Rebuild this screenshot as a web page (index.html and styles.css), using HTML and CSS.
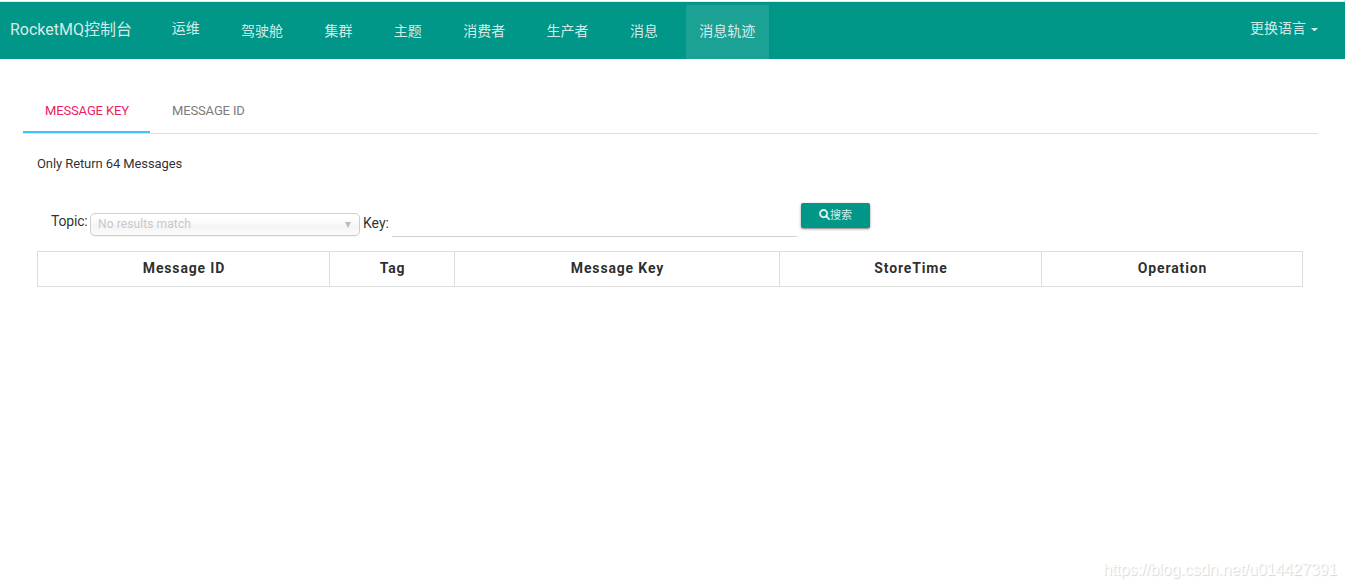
FILE: index.html
```html
<!DOCTYPE html>
<html lang="zh">
<head>
<meta charset="utf-8">
<title>RocketMQ控制台</title>
<link rel="stylesheet" href="styles.css">
</head>
<body>
<header class="navbar">
  <a class="brand">RocketMQ控制台</a>
  <nav class="menu">
    <a class="item raised">运维</a>
    <a class="item">驾驶舱</a>
    <a class="item">集群</a>
    <a class="item">主题</a>
    <a class="item">消费者</a>
    <a class="item">生产者</a>
    <a class="item">消息</a>
    <a class="item active">消息轨迹</a>
  </nav>
  <a class="language">更换语言<span class="caret"></span></a>
</header>
<main class="content">
  <div class="tabs">
    <a class="tab selected">MESSAGE KEY</a>
    <a class="tab">MESSAGE ID</a>
  </div>
  <section class="panel">
    <h5 class="hint">Only Return 64 Messages</h5>
    <form class="search">
      <label class="label-topic">Topic:</label>
      <div class="select"><span>No results match</span><i class="arrow"></i></div>
      <label class="label-key">Key:</label>
      <div class="field"></div>
      <button class="button" type="button"><svg width="11" height="11" viewBox="0 0 11 11"><circle cx="4.6" cy="4.6" r="3.6" fill="none" stroke="currentColor" stroke-width="1.9"/><path d="M7.2 7.2 10.1 10.1" stroke="currentColor" stroke-width="2" stroke-linecap="round"/></svg><span>搜索</span></button>
    </form>
    <table class="results">
      <colgroup><col class="c-id"><col class="c-tag"><col class="c-key"><col class="c-time"><col class="c-op"></colgroup>
      <tr><th>Message ID</th><th>Tag</th><th>Message Key</th><th>StoreTime</th><th>Operation</th></tr>
    </table>
  </section>
</main>
<footer class="watermark">https://blog.csdn.net/u014427391</footer>
</body>
</html>
```
FILE: styles.css
```css
* { box-sizing: border-box; }
body {
  margin: 0;
  height: 588px;
  overflow: hidden;
  display: flex;
  flex-direction: column;
  background: #fff;
  color: rgba(0, 0, 0, .84);
  font: 13px/18px Roboto, "Noto Sans CJK SC", sans-serif;
}
.navbar {
  display: flex;
  flex: none;
  height: 58px;
  margin-top: 1px;
  border-top: 1px solid #d9efed;
  background: #009688;
  color: rgba(255, 255, 255, .84);
}
.brand { width: 158px; padding: 19px 0 0 10px; font-size: 16px; white-space: nowrap; }
.menu { display: flex; gap: 14px; padding-top: 3px; }
.item { padding: 16px 13.7px 0; font-size: 14px; line-height: 20px; white-space: nowrap; }
.raised { padding-top: 13px; }
.active { background: rgba(255, 255, 255, .11); }
.language { display: flex; margin-left: auto; padding: 16px 27px 0 0; font-size: 14px; line-height: 20px; }
.caret { margin: 10px 0 0 5px; width: 7px; height: 4px; border: 3.5px solid transparent; border-top-color: currentColor; border-bottom: 0; }
.content { padding: 29px 27px 0 23px; }
.tabs { display: flex; height: 46px; border-bottom: 1px solid #dedede; }
.tab { height: 45px; padding: 14px 22px 0; color: #7b7b7b; letter-spacing: -.14px; white-space: nowrap; }
.selected { width: 127px; border-bottom: 2px solid #40c4ff; color: #e91e63; }
.panel { padding: 21px 15px 0 14px; }
.hint { margin: 0; font-size: 13px; line-height: 18px; font-weight: 400; letter-spacing: -.09px; }
.search { display: flex; height: 78px; padding: 30px 0 0 14px; }
.label-topic { width: 39px; padding-top: 9px; font-size: 14px; letter-spacing: -.2px; }
.select {
  display: flex;
  justify-content: space-between;
  width: 270px;
  height: 23px;
  margin-top: 10px;
  padding: 1px 8px 0 7px;
  border: 1px solid #cfcfcf;
  border-radius: 5px;
  background: linear-gradient(#fff 20%, #f8f8f8 50%, #f4f4f4 52%, #fafafa);
  box-shadow: 0 1px 1px rgba(0, 0, 0, .06);
  color: #c8c8c8;
  font-size: 12px;
  letter-spacing: .1px;
}
.arrow { width: 6px; height: 6px; margin-top: 7px; background: #bbb; clip-path: polygon(0 0, 100% 0, 50% 100%); }
.label-key { width: 32px; padding: 11px 0 0 3px; font-size: 14px; }
.field { width: 405px; height: 34px; border-bottom: 1px solid #d2d2d2; }
.button {
  display: flex;
  justify-content: center;
  width: 69px;
  height: 25px;
  margin: 0 0 0 4px;
  padding: 4px 0 0;
  border: 0;
  border-radius: 2px;
  background: #009688;
  color: rgba(255, 255, 255, .84);
  box-shadow: 0 1px 3px rgba(0, 0, 0, .35), 0 1px 1px rgba(0, 0, 0, .2);
  font: 11px/18px Roboto, "Noto Sans CJK SC", sans-serif;
}
.button svg { margin-top: 2px; }
.results { width: 1266px; table-layout: fixed; border-collapse: collapse; }
.results th {
  height: 35px;
  padding: 0 0 2px 1px;
  border: 1px solid #ddd;
  text-align: center;
  font-size: 14px;
  font-weight: 700;
  letter-spacing: .85px;
}
.c-id { width: 292px; }
.c-tag { width: 125px; }
.c-key { width: 325px; }
.c-time { width: 262px; }
.c-op { width: 261px; }
.watermark {
  margin: auto 8px 8px auto;
  color: #fff;
  font: 16px/20px "Liberation Sans", Arial, sans-serif;
  letter-spacing: -.08px;
  text-shadow: 1px 1px 1px #d4d4d4;
}
```
